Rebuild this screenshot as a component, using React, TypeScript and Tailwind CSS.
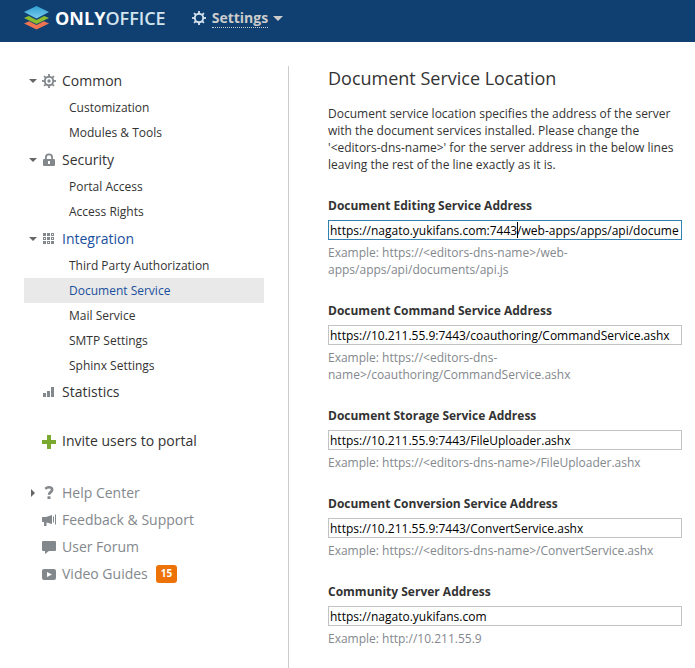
import React from "react";

const navGroups = [
  { title: "Common", icon: "gear", items: ["Customization", "Modules & Tools"] },
  { title: "Security", icon: "lock", items: ["Portal Access", "Access Rights"] },
  {
    title: "Integration",
    icon: "grid",
    items: [
      "Third Party Authorization",
      "Document Service",
      "Mail Service",
      "SMTP Settings",
      "Sphinx Settings",
    ],
  },
];

const helpLinks = [
  { title: "Help Center", icon: "help" },
  { title: "Feedback & Support", icon: "horn" },
  { title: "User Forum", icon: "forum" },
  { title: "Video Guides", icon: "video", badge: "15" },
];

const fields = [
  {
    id: "editing",
    label: "Document Editing Service Address",
    value: "https://nagato.yukifans.com:7443/web-apps/apps/api/documents/api.js",
    example: "Example: https://<editors-dns-name>/web-apps/apps/api/documents/api.js",
  },
  {
    id: "command",
    label: "Document Command Service Address",
    value: "https://10.211.55.9:7443/coauthoring/CommandService.ashx",
    example: "Example: https://<editors-dns-name>/coauthoring/CommandService.ashx",
  },
  {
    id: "storage",
    label: "Document Storage Service Address",
    value: "https://10.211.55.9:7443/FileUploader.ashx",
    example: "Example: https://<editors-dns-name>/FileUploader.ashx",
  },
  {
    id: "conversion",
    label: "Document Conversion Service Address",
    value: "https://10.211.55.9:7443/ConvertService.ashx",
    example: "Example: https://<editors-dns-name>/ConvertService.ashx",
  },
  {
    id: "community",
    label: "Community Server Address",
    value: "https://nagato.yukifans.com",
    example: "Example: http://10.211.55.9",
  },
];

const spokes = [0, 45, 90, 135, 180, 225, 270, 315];

function Gear({ dot }: { dot?: boolean }) {
  return (
    <>
      <circle cx="8" cy="8" r="4.2" fill="none" stroke="currentColor" strokeWidth="1.9" />
      {spokes.map((a) => (
        <path key={a} d="M7.1 1h1.8v2.6H7.1z" fill="currentColor" transform={`rotate(${a} 8 8)`} />
      ))}
      {dot && <circle cx="8" cy="8" r="1.7" fill="currentColor" />}
    </>
  );
}

function Icon({ name }: { name: string }) {
  return (
    <svg viewBox="0 0 16 16" className="size-4 shrink-0 text-[#83888d]" fill="currentColor" aria-hidden="true">
      {name === "gear" && <Gear dot />}
      {name === "lock" && (
        <path
          fillRule="evenodd"
          d="M4 7V5.500a4 4 0 0 1 8 0V7h1a1 1 0 0 1 1 1v5a1 1 0 0 1-1 1H3a1 1 0 0 1-1-1V8a1 1 0 0 1 1-1zM5.800 7h4.400V5.500a2.200 2.200 0 0 0-4.400 0zM7 9v3h2V9z"
        />
      )}
      {name === "grid" && (
        <>
          {[2, 6, 10].map((y) =>
            [2, 6, 10].map((x) => <path key={`${x}-${y}`} d={`M${x} ${y}h3v3h-3z`} />)
          )}
          <path d="M3 7h1v1H3zM11 3h1v1h-1zM11 7h1v1h-1zM7 11h1v1H7z" fill="#fff" />
        </>
      )}
      {name === "stats" && <path d="M2 9h3v4H2zM6 7h3v6H6zM10 3h3v10h-3z" />}
      {name === "plus" && <path d="M6 2h4v5h5v4h-5v5H6v-5H1V7h5z" fill="#7ba82e" />}
      {name === "help" && (
        <>
          <path
            d="M4.300 3.800C5.300 2.800 6.500 2.300 7.900 2.300c2 0 3.300 .9 3.300 2.500 0 2.300-3.200 2.400-3.200 5"
            fill="none"
            stroke="currentColor"
            strokeWidth="2.600"
          />
          <path d="M6.500 11.300h3V14h-3z" />
        </>
      )}
      {name === "horn" && (
        <>
          <path d="M1 5h4l6-2v9L5.500 10.500V14H3v-4H1z" />
          <path d="M12.500 4.500v6M14.500 2.500v10" stroke="currentColor" strokeWidth="1" />
        </>
      )}
      {name === "forum" && (
        <path d="M2 2h12a1 1 0 0 1 1 1v8a1 1 0 0 1-1 1H8l-4 3v-3H2a1 1 0 0 1-1-1V3a1 1 0 0 1 1-1z" />
      )}
      {name === "video" && (
        <path
          fillRule="evenodd"
          d="M3 3h10a2 2 0 0 1 2 2v7a2 2 0 0 1-2 2H3a2 2 0 0 1-2-2V5a2 2 0 0 1 2-2zM6 6v5l5-2.500z"
        />
      )}
    </svg>
  );
}

function Arrow({ kind }: { kind?: "down" | "right" }) {
  return (
    <svg viewBox="0 0 8 8" className="size-2 shrink-0" fill="#666" aria-hidden="true">
      {kind === "down" && <path d="M0 2h8L4 6z" />}
      {kind === "right" && <path d="M2 0v8l4-4z" />}
    </svg>
  );
}

function Marker({ icon, arrow }: { icon: string; arrow?: "down" | "right" }) {
  return (
    <span className="flex w-[38px] items-center gap-1 pl-[5px]">
      <Arrow kind={arrow} />
      <Icon name={icon} />
    </span>
  );
}

function Logo() {
  return (
    <a href="#" className="flex items-center gap-[6px] text-lg font-bold text-white">
      <svg viewBox="0 0 25 24" className="h-6 w-[25px]" aria-hidden="true">
        <defs>
          <linearGradient id="sky" x1="0" y1="0" x2="0" y2="1">
            <stop offset="0" stopColor="#2f9fd0" />
            <stop offset="1" stopColor="#7ccdf0" />
          </linearGradient>
        </defs>
        <path d="M0 17.500L12.500 12 25 17.500 12.500 23.500z" fill="#ec7450" />
        <path d="M-1 12l13.500-6L26 12l-13.500 7z" fill="#0f4071" />
        <path d="M0 12L12.500 6.500 25 12l-12.500 6z" fill="#8ebc2f" />
        <path d="M-1 7l13.500-6L26 7l-13.500 7z" fill="#0f4071" />
        <path d="M0 6L12.500 0 25 6l-12.500 6.500z" fill="url(#sky)" />
      </svg>
      <span>
        ONLY<span className="font-semibold text-[#d3e4ee]">OFFICE</span>
      </span>
    </a>
  );
}

export default function App() {
  return (
    <div className="min-h-screen bg-white font-['Open_Sans',sans-serif] text-xs text-[#333]">
      <header className="flex h-[42px] items-center gap-[25px] bg-[#0f4071] px-6 pb-[6px]">
        <Logo />
        <button type="button" className="flex items-center text-sm font-bold text-[#ccc]">
          <svg viewBox="0 0 16 16" className="mr-[5px] size-4 text-[#d5e3ee]" aria-hidden="true">
            <Gear />
          </svg>
          <span className="border-b border-dotted border-[#ccc] leading-[19px]">Settings</span>
          <svg viewBox="0 0 10 6" className="ml-[5px] h-[6px] w-[10px]" fill="#ccc" aria-hidden="true">
            <path d="M0 1h10L5 6z" />
          </svg>
        </button>
      </header>

      <div className="flex pt-6">
        <nav className="w-[264px] shrink-0 pl-6 text-sm">
          {navGroups.map((group) => (
            <section key={group.title}>
              <a
                href="#"
                className={`flex h-[29px] items-center ${group.title === "Integration" ? "text-[#1a4f9c]" : ""}`}
              >
                <Marker icon={group.icon} arrow="down" />
                {group.title}
              </a>
              <ul className="text-xs">
                {group.items.map((item) => (
                  <li key={item}>
                    <a
                      href="#"
                      className={`flex h-[25px] items-center pl-[45px] ${item === "Document Service" ? "bg-[#e9e9e9] text-[#1a4f9c]" : ""}`}
                    >
                      {item}
                    </a>
                  </li>
                ))}
              </ul>
            </section>
          ))}
          <a href="#" className="flex h-7 items-center">
            <Marker icon="stats" />
            Statistics
          </a>
          <a href="#" className="mt-5 mb-6 flex h-[29px] items-center">
            <Marker icon="plus" />
            Invite users to portal
          </a>
          {helpLinks.map((link) => (
            <a key={link.title} href="#" className="flex h-[27px] items-center text-[#83888d]">
              <Marker icon={link.icon} arrow={link.icon === "help" ? "right" : undefined} />
              {link.title}
              {link.badge && (
                <span className="ml-2 flex h-[18px] items-center rounded-[3px] bg-[#ed7309] px-[5px] text-[10px] font-bold text-white">
                  {link.badge}
                </span>
              )}
            </a>
          ))}
        </nav>

        <main className="ml-6 min-w-0 flex-1 border-l border-[#ccc] pr-[13px] pl-[39px]">
          <h1 className="text-lg leading-6">Document Service Location</h1>
          <p className="mt-[15px] mb-6 leading-[17px]">
            Document service location specifies the address of the server with the document services
            installed. Please change the '&lt;editors-dns-name&gt;' for the server address in the
            below lines leaving the rest of the line exactly as it is.
          </p>
          {fields.map((field) => (
            <div key={field.id} className="mb-6 leading-[17px]">
              <label htmlFor={field.id} className="mb-[6px] block font-bold">
                {field.label}
              </label>
              <div className="relative">
                <input
                  id={field.id}
                  type="text"
                  defaultValue={field.value}
                  className={`block h-5 w-full border pr-[2px] pl-px text-black outline-none ${field.id === "editing" ? "border-[#3182b3]" : "border-[#c3c3c3]"}`}
                />
                {field.id === "editing" && (
                  <span className="absolute top-[2px] left-[189px] h-4 w-px bg-black" />
                )}
              </div>
              <p className="mt-1 text-[#83888d]">{field.example}</p>
            </div>
          ))}
        </main>
      </div>
    </div>
  );
}
